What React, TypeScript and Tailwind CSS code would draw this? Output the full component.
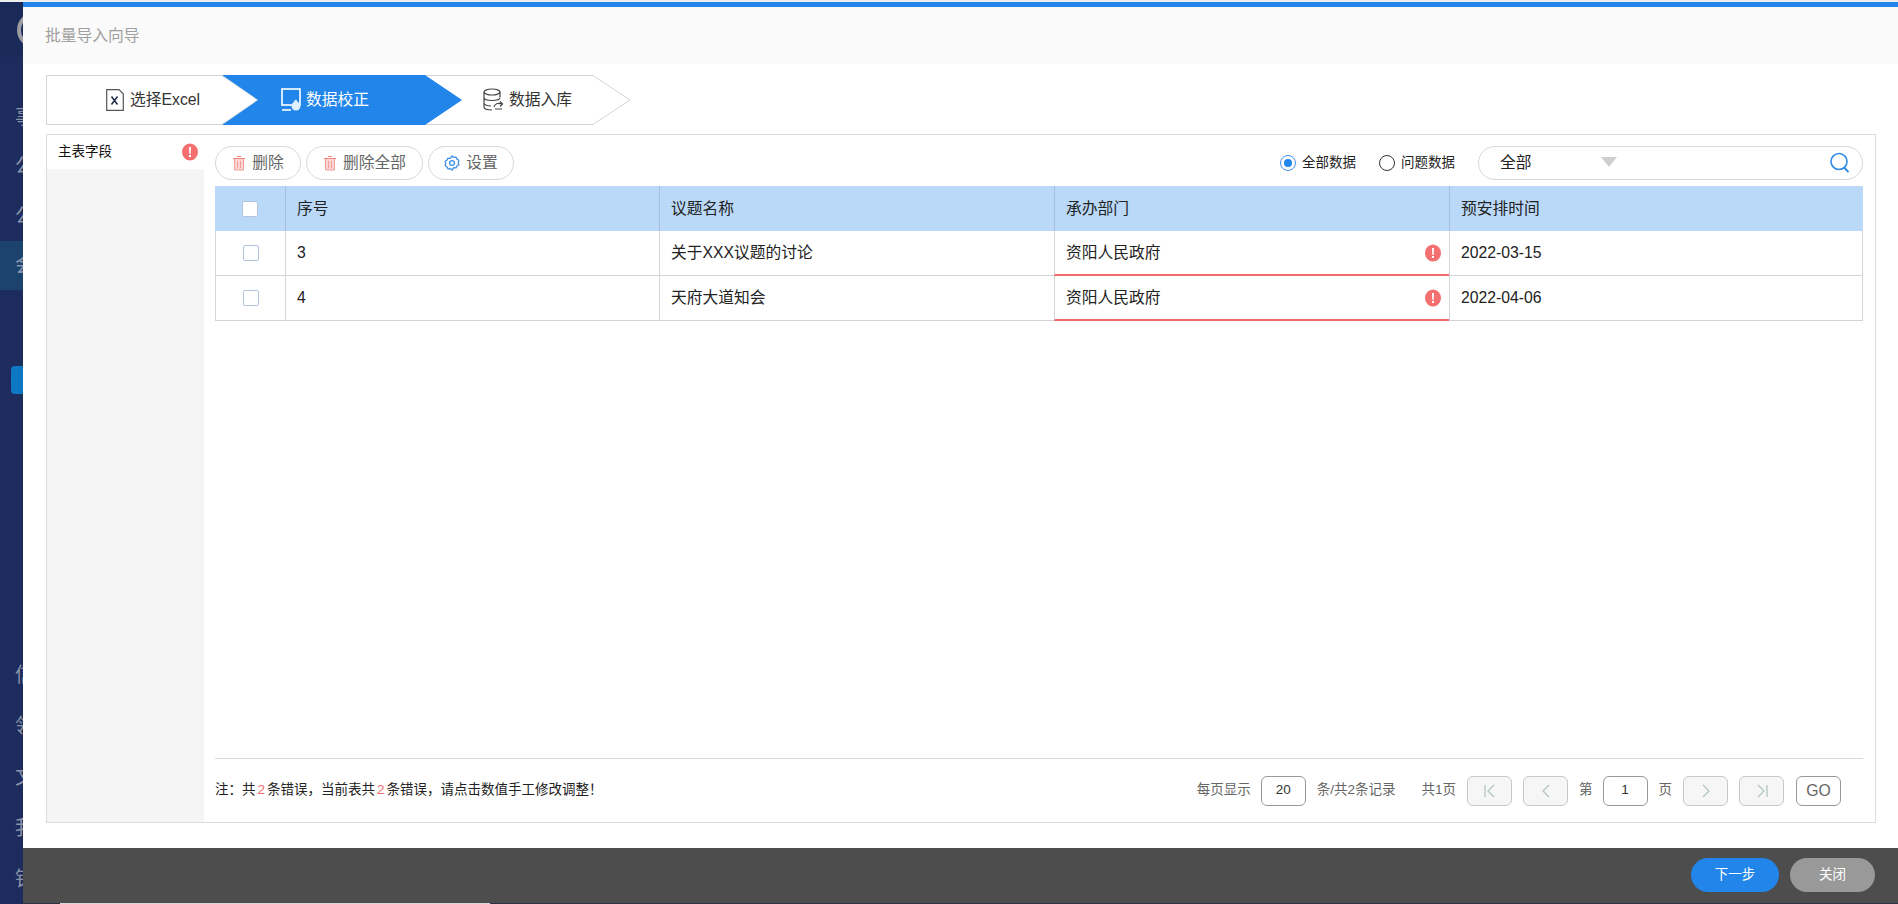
import React from "react";

const FONT = "font-['Liberation_Sans','Noto_Sans_CJK_SC',sans-serif]";

function ErrorDot() {
  return (
    <svg width="16" height="18" viewBox="0 0 16 18" className="shrink-0">
      <ellipse cx="8" cy="9" rx="8" ry="8.6" fill="#f46f6f" />
      <path d="M7 4h2l-.3 7H7.300z" fill="#fff" />
      <rect x="7" y="12" width="2" height="2" fill="#fff" />
    </svg>
  );
}

function Trash() {
  return (
    <svg width="14" height="16" viewBox="0 0 14 16" className="shrink-0">
      <path d="M5 1.500h4M1 3.500h12" stroke="#f0857a" strokeWidth="1.200" fill="none" />
      <rect x="2.500" y="4" width="9" height="11" fill="#fbd5d5" />
      <path d="M2.500 4v11h9V4M5.500 6v7M8.500 6v7" stroke="#f0a090" strokeWidth="1" fill="none" />
    </svg>
  );
}

function Gear() {
  return (
    <svg width="16" height="16" viewBox="0 0 16 16" className="shrink-0">
      <path
        d="M8 1l1.800 1.300 2.200-.2.900 2 1.900 1.200-.5 2.200.5 2.200-1.900 1.200-.9 2-2.200-.2L8 15l-1.800-1.300-2.200.2-.9-2-1.900-1.200.5-2.200-.5-2.200 1.900-1.200.9-2 2.200.2z"
        fill="none"
        stroke="#3f8fe8"
        strokeWidth="1.300"
      />
      <circle cx="8" cy="8" r="2.400" fill="none" stroke="#3f8fe8" strokeWidth="1.300" />
    </svg>
  );
}

function ToolButton({ icon, label, className }: { icon: React.ReactNode; label: string; className: string }) {
  return (
    <button className={`h-[34px] rounded-full border border-[#d8d8d8] bg-white flex items-center justify-center gap-[6px] text-[15.75px] text-[#666] ${className}`}>
      {icon}
      <span>{label}</span>
    </button>
  );
}

function Radio({ checked, label }: { checked: boolean; label: string }) {
  return (
    <div className="flex items-center gap-[6px] text-[13.5px] text-[#222]">
      <span className={`w-[16px] h-[16px] rounded-full border flex items-center justify-center bg-white ${checked ? "border-[#3f8fe8]" : "border-[#333]"}`}>
        {checked && <span className="w-[8px] h-[8px] rounded-full bg-[#2185ea]" />}
      </span>
      <span>{label}</span>
    </div>
  );
}

function PageButton({ d }: { d: string }) {
  return (
    <div className="w-[45px] h-[30px] rounded-[6px] border border-[#c8c8c8] bg-[#f6f6f6] flex items-center justify-center">
      <svg width="20" height="20" viewBox="0 0 20 20">
        <path d={d} fill="none" stroke="#b4c6c2" strokeWidth="1.300" />
      </svg>
    </div>
  );
}

function PageBox({ value }: { value: string }) {
  return (
    <div className="w-[45px] h-[30px] rounded-[6px] border border-[#999] bg-white flex items-center justify-center text-[13.5px] text-[#333]">
      {value}
    </div>
  );
}

const GRID = "grid grid-cols-[70px_374px_395px_395px_414px]";

function Row({ no, name, dept, date }: { no: string; name: string; dept: string; date: string }) {
  return (
    <div className={`${GRID} h-[45px] text-[15.75px] text-[#222]`}>
      <div className="border-l border-b border-[#d4d4d4] flex items-center justify-center">
        <span className="w-[16px] h-[16px] rounded-[2px] border border-[#b3c3dc] bg-white" />
      </div>
      <div className="border-l border-b border-[#d4d4d4] flex items-center pl-[11px]">{no}</div>
      <div className="border-l border-b border-[#d4d4d4] flex items-center pl-[11px]">{name}</div>
      <div className="border-l border-b-2 border-l-[#d4d4d4] border-b-[#f26a6a] flex items-center justify-between pl-[11px] pr-[8px]">
        <span>{dept}</span>
        <ErrorDot />
      </div>
      <div className="border-l border-r border-b border-[#d4d4d4] flex items-center pl-[11px]">{date}</div>
    </div>
  );
}

const NAV_TOP = ["事", "公", "公"];
const NAV_BOTTOM = ["信", "领", "文", "我", "钟"];

export default function App() {
  return (
    <div className={`${FONT} w-full h-[904px] flex overflow-hidden bg-white`}>
      <aside className="w-[23px] shrink-0 bg-[#1d2c5c] overflow-hidden flex flex-col text-[20px] text-[#8b93aa]">
        <div className="h-[2px] bg-[#eeeeee]" />
        <div className="h-[57px] bg-[#1a2a58] flex items-center pl-[17px]">
          <div className="w-[36px] h-[36px] shrink-0 rounded-full border-[4px] border-[#9c9ca4]" />
        </div>
        <div className="h-[36px]" />
        {NAV_TOP.map((t) => (
          <div key={t + Math.random()} className="h-[51px] flex items-center pl-[15px] whitespace-nowrap">{t}</div>
        ))}
        <div className="h-[51px] bg-[#1c436e] flex items-center pl-[15px] whitespace-nowrap">会</div>
        <div className="h-[78px]" />
        <div className="h-[28px] ml-[11px] w-[20px] rounded-[4px] bg-[#0d78c4] shrink-0" />
        <div className="h-[263px]" />
        {NAV_BOTTOM.map((t) => (
          <div key={t} className="h-[51px] shrink-0 flex items-center pl-[15px] whitespace-nowrap">{t}</div>
        ))}
      </aside>

      <div className="flex-1 min-w-0 flex flex-col bg-white">
        <div className="h-[2px] bg-[#eeeeee]" />
        <div className="h-[5px] bg-[#2185ea]" />
        <div className="h-[57px] bg-[#fafafa] flex items-center pl-[22px] text-[15.75px] text-[#a0a0a0]">批量导入向导</div>

        <div className="flex-1 min-h-0 pl-[23px] pr-[22px]">
          {/* stepper */}
          <div className="relative mt-[11px] w-[585px] h-[50px] flex items-center text-[15.75px]">
            <svg className="absolute inset-0" width="585" height="50" viewBox="0 0 585 50">
              <path d="M.5.500H176L212 25 176 49.500H.5z" fill="#fff" stroke="#d4d4d4" />
              <path d="M379 .5h168L584 25 547 49.500H379" fill="#fff" stroke="#d4d4d4" />
              <path d="M176 0H379L416 25 379 50H176L212 25z" fill="#2185ea" />
            </svg>
            <div className="relative ml-[60px] w-[175px] flex items-center gap-[6px] text-[#333]">
              <svg width="18" height="22" viewBox="0 0 18 22" className="shrink-0">
                <path d="M.7.700H13L17.300 5V21.300H.7z" fill="#fff" stroke="#555" strokeWidth="1.200" />
                <path d="M5.500 7.500l6 8M11.500 7.500l-6 8" stroke="#1f2a44" strokeWidth="1.500" />
              </svg>
              <span>选择Excel</span>
            </div>
            <div className="relative w-[202px] flex items-center gap-[4px] text-white">
              <svg width="21" height="24" viewBox="0 0 21 24" className="shrink-0">
                <rect x="1" y="1" width="18" height="16" fill="none" stroke="#fff" strokeWidth="1.600" />
                <path d="M1 22h9" stroke="#fff" strokeWidth="1.600" />
                <circle cx="15" cy="18" r="4.500" fill="#dff0ff" />
                <rect x="13.500" y="12" width="2.500" height="6" fill="#dff0ff" />
              </svg>
              <span>数据校正</span>
            </div>
            <div className="relative flex items-center gap-[5px] text-[#333]">
              <svg width="21" height="24" viewBox="0 0 21 24" className="shrink-0">
                <ellipse cx="9" cy="4" rx="8" ry="3" fill="none" stroke="#444" strokeWidth="1.200" />
                <path d="M1 4v15c0 2 4 3 8 3M17 4v5M1 9.500c0 2 4 3 8 3s8-1 8-3M1 15c0 2 4 3 7 3" fill="none" stroke="#444" strokeWidth="1.200" />
                <path d="M11 19c.5-3 4-4.500 8-3M17 13.500l2.500 2.500-2.500 2.500M12 21h7" fill="none" stroke="#444" strokeWidth="1.200" />
              </svg>
              <span>数据入库</span>
            </div>
          </div>

          {/* main panel */}
          <div className="mt-[9px] h-[689px] border border-[#dcdcdc] flex">
            <div className="w-[157px] shrink-0 bg-[#f5f5f5]">
              <div className="h-[34px] bg-white flex items-center justify-between pl-[11px] pr-[6px] text-[13.5px] text-[#111]">
                <span>主表字段</span>
                <ErrorDot />
              </div>
            </div>

            <div className="flex-1 min-w-0 flex flex-col pl-[11px] pr-[12px]">
              <div className="mt-[11px] h-[34px] flex items-center">
                <ToolButton icon={<Trash />} label="删除" className="w-[86px]" />
                <ToolButton icon={<Trash />} label="删除全部" className="w-[117px] ml-[5px]" />
                <ToolButton icon={<Gear />} label="设置" className="w-[86px] ml-[5px]" />
                <div className="flex-1" />
                <Radio checked label="全部数据" />
                <div className="w-[23px]" />
                <Radio checked={false} label="问题数据" />
                <div className="w-[23px]" />
                <div className="relative w-[385px] h-[34px] rounded-full border border-[#d8d8d8] bg-white flex items-center pl-[21px] text-[15.75px] text-[#222]">
                  <span>全部</span>
                  <svg width="16" height="10" viewBox="0 0 16 10" className="ml-[69px] mb-[2px]">
                    <path d="M0 0h16L8 10z" fill="#cfcfcf" />
                  </svg>
                  <svg width="22" height="22" viewBox="0 0 22 22" className="absolute right-[11px] top-[5px]">
                    <circle cx="10" cy="9.500" r="8" fill="none" stroke="#2f8ae8" strokeWidth="1.600" />
                    <path d="M15 15.500l4.500 4.500" stroke="#2f8ae8" strokeWidth="1.800" />
                  </svg>
                </div>
              </div>

              <div className={`${GRID} mt-[6px] h-[45px] bg-[#bad9f9] text-[15.75px] text-[#222]`}>
                <div className="flex items-center justify-center">
                  <span className="w-[16px] h-[16px] rounded-[2px] border border-[#b3c3dc] bg-white" />
                </div>
                <div className="border-l border-[#a6c0dc] flex items-center pl-[11px]">序号</div>
                <div className="border-l border-[#a6c0dc] flex items-center pl-[11px]">议题名称</div>
                <div className="border-l border-[#a6c0dc] flex items-center pl-[11px]">承办部门</div>
                <div className="border-l border-[#a6c0dc] flex items-center pl-[11px]">预安排时间</div>
              </div>
              <Row no="3" name="关于XXX议题的讨论" dept="资阳人民政府" date="2022-03-15" />
              <Row no="4" name="天府大道知会" dept="资阳人民政府" date="2022-04-06" />

              <div className="flex-1" />

              <div className="h-[64px] border-t border-[#d8d8d8] flex items-center text-[13.5px]">
                <div className="text-[#222]">
                  注：共<span className="text-[#f26a6a] mx-[2px]">2</span>条错误，当前表共<span className="text-[#f26a6a] mx-[2px]">2</span>条错误，请点击数值手工修改调整！
                </div>
                <div className="flex-1" />
                <div className="flex items-center text-[#666] mr-[22px]">
                  <span>每页显示</span>
                  <div className="w-[10px]" />
                  <PageBox value="20" />
                  <div className="w-[11px]" />
                  <span>条/共2条记录</span>
                  <div className="w-[26px]" />
                  <span>共1页</span>
                  <div className="w-[11px]" />
                  <PageButton d="M5 4v12M14 4l-6 6 6 6" />
                  <div className="w-[11px]" />
                  <PageButton d="M13 4l-6 6 6 6" />
                  <div className="w-[11px]" />
                  <span>第</span>
                  <div className="w-[10px]" />
                  <PageBox value="1" />
                  <div className="w-[11px]" />
                  <span>页</span>
                  <div className="w-[11px]" />
                  <PageButton d="M7 4l6 6-6 6" />
                  <div className="w-[11px]" />
                  <PageButton d="M6 4l6 6-6 6M15 4v12" />
                  <div className="w-[12px]" />
                  <div className="w-[45px] h-[30px] rounded-[6px] border border-[#999] bg-white flex items-center justify-center text-[15.75px] text-[#666]">GO</div>
                </div>
              </div>
            </div>
          </div>
        </div>

        {/* footer */}
        <div className="h-[55px] bg-[#4d4d4d] flex items-center justify-end pr-[23px] gap-[11px] pb-[1px]">
          <button className="w-[88px] h-[34px] rounded-full bg-[#2185ea] text-white text-[13.5px]">下一步</button>
          <button className="w-[85px] h-[34px] rounded-full bg-[#999999] text-white text-[13.5px]">关闭</button>
        </div>
        <div className="h-[1px] bg-[#2b3444] pl-[37px]">
          <div className="w-[430px] h-[1px] bg-[#d8d8d8]" />
        </div>
      </div>
    </div>
  );
}
